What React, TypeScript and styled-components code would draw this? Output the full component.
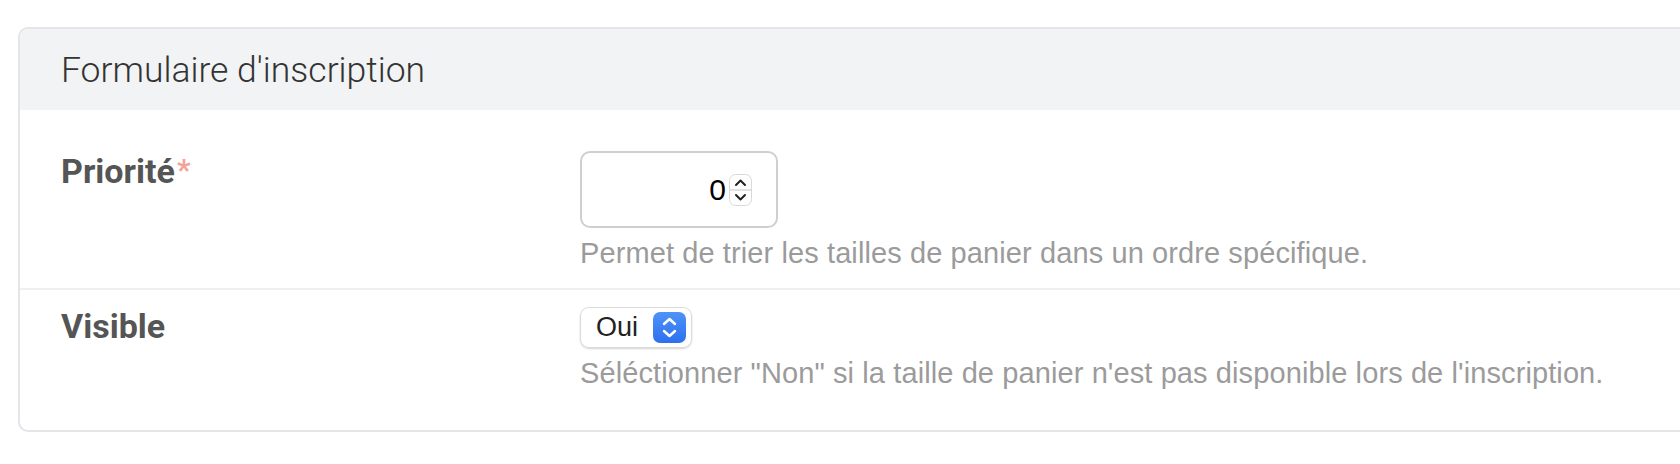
import React from "react";
import styled, { createGlobalStyle } from "styled-components";

const GlobalStyle = createGlobalStyle`
  html, body {
    margin: 0;
    padding: 0;
    background: #ffffff;
    overflow: hidden;
  }
`;

const Page = styled.main`
  padding: 27px 0 0 18px;
`;

const Card = styled.section`
  margin-right: -40px;
  border: 2px solid #e4e4e9;
  border-radius: 10px;
  overflow: hidden;
  background: #fff;
`;

const CardHeader = styled.header`
  height: 81px;
  display: flex;
  align-items: center;
  padding: 0 41px;
  background: #f2f3f5;
`;

const Title = styled.h2`
  margin: 0;
  font-family: Roboto, "Liberation Sans", sans-serif;
  font-weight: 300;
  font-size: 35.5px;
  color: #333333;
`;

const CardBody = styled.div`
  padding: 24px 0 22px;
`;

const Row = styled.div`
  display: grid;
  grid-template-columns: 519px 1fr;
  padding: 17px 0 15px 41px;

  & + & {
    border-top: 2px solid #f0f0f2;
  }
`;

const Label = styled.label`
  font-family: Roboto, "Liberation Sans", sans-serif;
  font-weight: 700;
  font-size: 34px;
  line-height: 38px;
  color: #555555;
`;

const Required = styled.span`
  font-family: Roboto, "Liberation Sans", sans-serif;
  font-weight: 700;
  font-size: 30px;
  color: #f4a29a;
  vertical-align: 3px;
  margin-left: 2px;
`;

const Field = styled.div`
  display: flex;
  flex-direction: column;
  align-items: flex-start;
`;

const NumberBox = styled.div`
  box-sizing: border-box;
  width: 198px;
  height: 77px;
  border: 2px solid #cfcfcf;
  border-radius: 10px;
  display: flex;
  align-items: center;
  justify-content: flex-end;
  gap: 3px;
  padding-right: 24px;
  font-family: "Liberation Sans", Arial, sans-serif;
  font-size: 30px;
  color: #000;
`;

const SelectBox = styled.div`
  box-sizing: border-box;
  width: 112px;
  height: 41px;
  border: 1px solid #dcdcdc;
  border-radius: 9px;
  box-shadow: 0 1px 2px rgba(0, 0, 0, 0.18);
  display: flex;
  align-items: center;
  justify-content: space-between;
  padding: 0 5px 0 15px;
  font-family: "Liberation Sans", Arial, sans-serif;
  font-size: 27px;
  color: #222;
`;

const SelectButton = styled.span`
  width: 33px;
  height: 31px;
  border-radius: 7px;
  background: linear-gradient(180deg, #4f93f8 0%, #2d70ef 100%);
  display: flex;
  align-items: center;
  justify-content: center;
`;

const Help = styled.p`
  margin: 5px 0 0;
  font-family: "Liberation Sans", Arial, sans-serif;
  font-size: 29px;
  line-height: 40px;
  letter-spacing: 0.1px;
  color: #9b9b9b;
  white-space: nowrap;
`;

const Stepper = () => (
  <svg width="23" height="32" viewBox="0 0 23 32">
    <rect x="0.5" y="0.5" width="22" height="31" rx="6" fill="#fff" stroke="#d8d8d8" />
    <line x1="1" y1="16" x2="22" y2="16" stroke="#d8d8d8" strokeWidth="1.5" />
    <polyline points="7,11 11.5,6.5 16,11" fill="none" stroke="#222" strokeWidth="2" strokeLinecap="round" strokeLinejoin="round" />
    <polyline points="7,21 11.5,25.5 16,21" fill="none" stroke="#222" strokeWidth="2" strokeLinecap="round" strokeLinejoin="round" />
  </svg>
);

const UpDown = () => (
  <svg width="33" height="31" viewBox="0 0 33 31">
    <polyline points="11,12 16.5,7 22,12" fill="none" stroke="#fff" strokeWidth="2.5" strokeLinecap="round" strokeLinejoin="round" />
    <polyline points="11,19 16.5,24 22,19" fill="none" stroke="#fff" strokeWidth="2.5" strokeLinecap="round" strokeLinejoin="round" />
  </svg>
);

export default function App() {
  return (
    <>
      <GlobalStyle />
      <Page>
        <Card>
          <CardHeader>
            <Title>Formulaire d'inscription</Title>
          </CardHeader>
          <CardBody>
            <Row>
              <Label>
                Priorité<Required>*</Required>
              </Label>
              <Field>
                <NumberBox>
                  <span>0</span>
                  <Stepper />
                </NumberBox>
                <Help>Permet de trier les tailles de panier dans un ordre spécifique.</Help>
              </Field>
            </Row>
            <Row>
              <Label>Visible</Label>
              <Field>
                <SelectBox>
                  <span>Oui</span>
                  <SelectButton>
                    <UpDown />
                  </SelectButton>
                </SelectBox>
                <Help>
                  Séléctionner "Non" si la taille de panier n'est pas disponible lors de l'inscription.
                </Help>
              </Field>
            </Row>
          </CardBody>
        </Card>
      </Page>
    </>
  );
}
